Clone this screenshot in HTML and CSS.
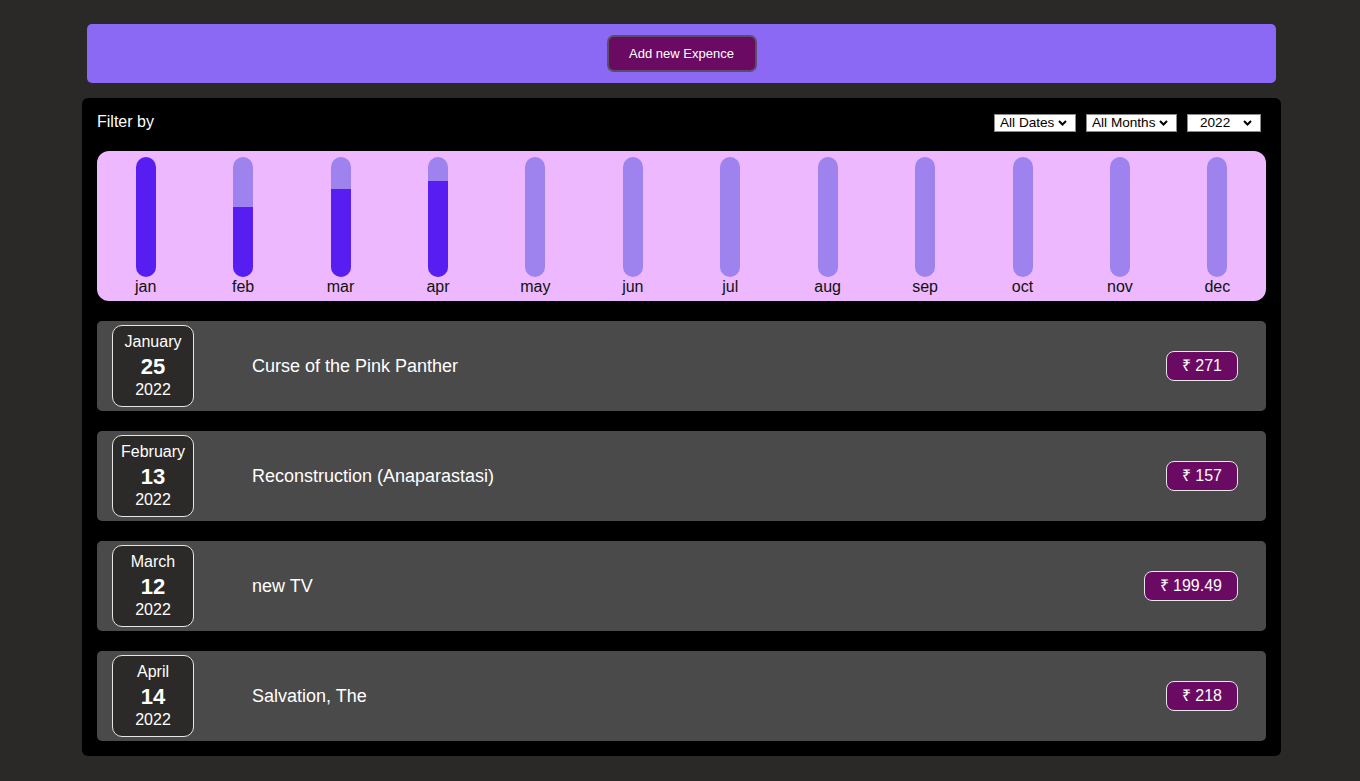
FILE: index.html
```html
<!DOCTYPE html>
<html lang="en">
<head>
<meta charset="utf-8">
<title>Expenses</title>
<link rel="stylesheet" href="styles.css">
</head>
<body>
<div class="topbar">
  <button class="add-btn">Add new Expence</button>
</div>
<main class="panel">
  <div class="filter-row">
    <span class="filter-label">Filter by</span>
    <div class="selects">
      <select class="sel sel-dates"><option>All Dates</option></select>
      <select class="sel sel-months"><option>All Months</option></select>
      <select class="sel sel-year"><option>2022</option></select>
    </div>
  </div>
  <div class="chart">
    <div class="col"><div class="bar"><div class="fill" style="height:100%"></div></div><span class="mlabel">jan</span></div>
    <div class="col"><div class="bar"><div class="fill" style="height:58%"></div></div><span class="mlabel">feb</span></div>
    <div class="col"><div class="bar"><div class="fill" style="height:73.6%"></div></div><span class="mlabel">mar</span></div>
    <div class="col"><div class="bar"><div class="fill" style="height:80.4%"></div></div><span class="mlabel">apr</span></div>
    <div class="col"><div class="bar"></div><span class="mlabel">may</span></div>
    <div class="col"><div class="bar"></div><span class="mlabel">jun</span></div>
    <div class="col"><div class="bar"></div><span class="mlabel">jul</span></div>
    <div class="col"><div class="bar"></div><span class="mlabel">aug</span></div>
    <div class="col"><div class="bar"></div><span class="mlabel">sep</span></div>
    <div class="col"><div class="bar"></div><span class="mlabel">oct</span></div>
    <div class="col"><div class="bar"></div><span class="mlabel">nov</span></div>
    <div class="col"><div class="bar"></div><span class="mlabel">dec</span></div>
  </div>
  <ul class="list">
    <li class="item">
      <div class="date"><span class="d-month">January</span><span class="d-day">25</span><span class="d-year">2022</span></div>
      <span class="title">Curse of the Pink Panther</span>
      <span class="amount">₹ 271</span>
    </li>
    <li class="item">
      <div class="date"><span class="d-month">February</span><span class="d-day">13</span><span class="d-year">2022</span></div>
      <span class="title">Reconstruction (Anaparastasi)</span>
      <span class="amount">₹ 157</span>
    </li>
    <li class="item">
      <div class="date"><span class="d-month">March</span><span class="d-day">12</span><span class="d-year">2022</span></div>
      <span class="title">new TV</span>
      <span class="amount">₹ 199.49</span>
    </li>
    <li class="item">
      <div class="date"><span class="d-month">April</span><span class="d-day">14</span><span class="d-year">2022</span></div>
      <span class="title">Salvation, The</span>
      <span class="amount">₹ 218</span>
    </li>
  </ul>
</main>
</body>
</html>
```

FILE: styles.css
```css
* { box-sizing: border-box; }

body {
  margin: 0;
  padding: 24px 0 20px 3px;
  background: #2a2928;
  font-family: "Liberation Sans", Arial, sans-serif;
}

.topbar {
  width: 1189px;
  height: 59px;
  margin: 0 auto;
  background: #8c69f4;
  border-radius: 5px;
  display: flex;
  align-items: center;
  justify-content: center;
}

.add-btn {
  width: 150px;
  height: 37px;
  background: #6a0a63;
  color: #fff;
  border: 2px solid #5a4e66;
  border-radius: 7px;
  font-family: "Liberation Sans", Arial, sans-serif;
  font-size: 13px;
  padding: 0;
}

.panel {
  width: 1199px;
  margin: 15px auto 0;
  background: #000;
  border-radius: 6px;
  padding: 15px 15px 15px;
}

.filter-row {
  display: flex;
  justify-content: space-between;
  align-items: center;
  height: 18px;
  margin-top: 1px;
  margin-right: 5px;
}

.filter-label {
  color: #fff;
  font-size: 16px;
  margin-top: -2px;
}

.selects {
  display: flex;
  gap: 10px;
}

.sel {
  appearance: none;
  -webkit-appearance: none;
  height: 18px;
  font-family: "Liberation Sans", Arial, sans-serif;
  font-size: 13.6px;
  line-height: 16px;
  background-color: #fff;
  background-image: url("data:image/svg+xml,%3Csvg xmlns='http://www.w3.org/2000/svg' width='9' height='6' viewBox='0 0 9 6'%3E%3Cpath d='M1 1l3.5 3.5L8 1' fill='none' stroke='%23000' stroke-width='2'/%3E%3C/svg%3E");
  background-repeat: no-repeat;
  background-position: right 8px center;
  color: #000;
  border: 1px solid #8a8a8a;
  border-radius: 0;
  padding: 0 0 0 5px;
}

.sel-dates { width: 82px; }
.sel-months { width: 91px; }

.sel-year {
  width: 74px;
  padding-left: 12px;
}

.chart {
  margin-top: 19px;
  height: 150px;
  background: #edb8fd;
  border-radius: 12px;
  display: flex;
  padding-top: 6px;
}

.col {
  flex: 1;
  display: flex;
  flex-direction: column;
  align-items: center;
}

.bar {
  width: 20px;
  height: 120px;
  background: #9e82ee;
  border-radius: 10px;
  overflow: hidden;
  display: flex;
  flex-direction: column;
  justify-content: flex-end;
}

.fill {
  background: #581ef1;
  width: 100%;
}

.mlabel {
  font-size: 16px;
  color: #111;
  line-height: 18px;
  margin-top: 1px;
}

.list {
  list-style: none;
  margin: 20px 0 0;
  padding: 0;
  display: flex;
  flex-direction: column;
  gap: 20px;
}

.item {
  height: 90px;
  background: #4b4a4a;
  border-radius: 5px;
  display: flex;
  align-items: center;
  padding: 0 28px 0 15px;
}

.date {
  width: 82px;
  height: 82px;
  background: #2b2a29;
  border: 1px solid #e6e6e6;
  border-radius: 10px;
  color: #fff;
  display: flex;
  flex-direction: column;
  align-items: center;
  justify-content: center;
  padding-bottom: 2px;
}

.d-month {
  font-size: 16px;
  line-height: 20px;
}

.d-day {
  font-size: 22px;
  font-weight: bold;
  line-height: 30px;
}

.d-year {
  font-size: 16px;
  line-height: 16px;
}

.title {
  flex: 1;
  margin-left: 58px;
  color: #fff;
  font-size: 18px;
}

.amount {
  background: #6a0a63;
  color: #fff;
  border: 1px solid #e6e6e6;
  border-radius: 8px;
  font-size: 16px;
  height: 30px;
  line-height: 27px;
  padding: 0 15px 1px;
  margin-top: -1px;
}
```
